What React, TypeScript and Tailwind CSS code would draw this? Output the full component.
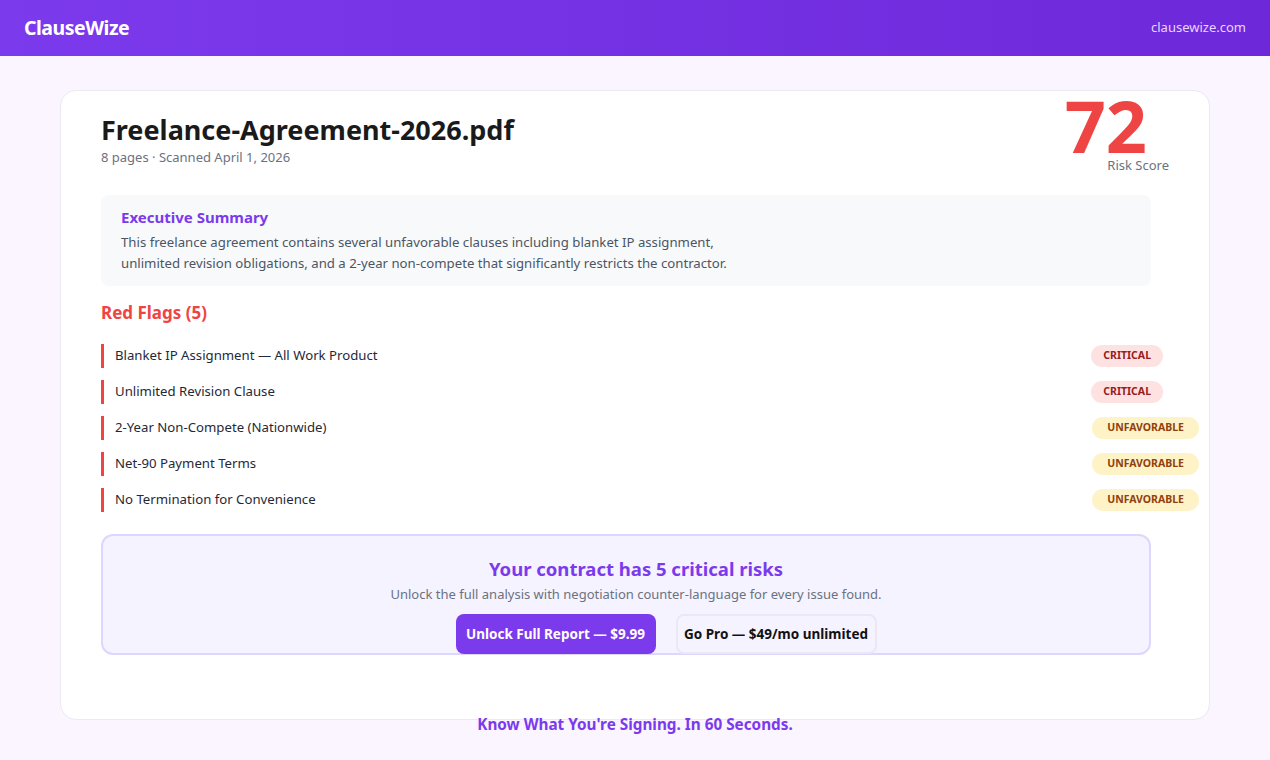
const flags = [
  { title: "Blanket IP Assignment — All Work Product", level: "CRITICAL" },
  { title: "Unlimited Revision Clause", level: "CRITICAL" },
  { title: "2-Year Non-Compete (Nationwide)", level: "UNFAVORABLE" },
  { title: "Net-90 Payment Terms", level: "UNFAVORABLE" },
  { title: "No Termination for Convenience", level: "UNFAVORABLE" },
];

export default function App() {
  return (
    <div className="min-h-[760px] bg-[#faf5ff] font-['Noto_Sans',sans-serif] text-[#111827]">
      <header className="h-14 flex items-center justify-between px-6 bg-gradient-to-r from-[#7c3aed] to-[#6d28d9]">
        <span className="text-white text-[19.5px] font-bold tracking-tight">ClauseWize</span>
        <span className="text-[#e9d5ff] text-[13px]">clausewize.com</span>
      </header>

      <main className="pt-[34px] px-[60px]">
        <div className="h-[630px] bg-white border border-[#ede9f3] rounded-2xl pt-[18px] pl-10 pr-10">
          <div className="flex justify-between items-start h-[58px]">
            <div className="pt-[1px]">
              <h1 className="text-[27px] font-bold leading-[40px] text-[#1a1a1a]">Freelance-Agreement-2026.pdf</h1>
              <p className="text-[13px] text-[#6b7280] leading-5 -mt-[3px]">8 pages · Scanned April 1, 2026</p>
            </div>
            <div className="flex flex-col items-end -mt-[13px]">
              <span className="text-[72px] font-bold leading-[58px] text-[#ef4444] mr-[22px]">72</span>
              <span className="text-[13px] text-[#6b7280] leading-4 mt-[3px]">Risk Score</span>
            </div>
          </div>

          <section className="mt-[28px] w-[1050px] bg-[#f8f9fb] rounded-lg px-5 pt-[10px] pb-[12px]">
            <h2 className="text-[15px] font-bold text-[#7c3aed] leading-6">Executive Summary</h2>
            <p className="mt-[3px] text-[13.2px] text-[#4b5563] leading-[21px]">
              This freelance agreement contains several unfavorable clauses including blanket IP assignment,
              <br />
              unlimited revision obligations, and a 2-year non-compete that significantly restricts the contractor.
            </p>
          </section>

          <h3 className="mt-[15px] text-[17px] font-bold text-[#ef4444] leading-6">Red Flags (5)</h3>

          <ul className="mt-[19px] flex flex-col gap-[12px] w-[1098px]">
            {flags.map((f) => (
              <li key={f.title} className="flex items-center justify-between border-l-[3px] border-[#ef4444] pl-[11px] h-6">
                <span className="text-[13.2px] text-[#1f2937]">{f.title}</span>
                <span
                  className={
                    f.level === "CRITICAL"
                      ? "h-[22px] px-3 rounded-full bg-[#fee2e2] text-[#991b1b] text-[10.5px] font-bold flex items-center mr-[36px]"
                      : "h-[22px] px-[15px] rounded-full bg-[#fef3c7] text-[#92400e] text-[10.5px] font-bold flex items-center"
                  }
                >
                  {f.level}
                </span>
              </li>
            ))}
          </ul>

          <section className="mt-[22px] w-[1050px] h-[121px] bg-[#f5f3ff] border-2 border-[#ddd6fe] rounded-xl flex flex-col items-center pt-[19px] pl-5">
            <h2 className="text-[18.5px] font-bold text-[#7c3aed] leading-7">Your contract has 5 critical risks</h2>
            <p className="text-[13px] text-[#6b7280] leading-5 mt-[1px]">
              Unlock the full analysis with negotiation counter-language for every issue found.
            </p>
            <div className="mt-[10px] flex gap-5 ml-[60px]">
              <button className="w-[200px] h-10 rounded-lg bg-[#7c3aed] text-white text-[13.5px] font-bold">
                Unlock Full Report — $9.99
              </button>
              <button className="w-[201px] h-10 rounded-lg bg-[#f5f3ff] border-2 border-[#ebe8f2] text-[#111] text-[13.5px] font-bold">
                Go Pro — $49/mo unlimited
              </button>
            </div>
          </section>
        </div>
        <p className="-mt-[8px] text-center text-[15.3px] font-bold text-[#7c3aed] leading-6">
          Know What You're Signing. In 60 Seconds.
        </p>
      </main>
    </div>
  );
}
